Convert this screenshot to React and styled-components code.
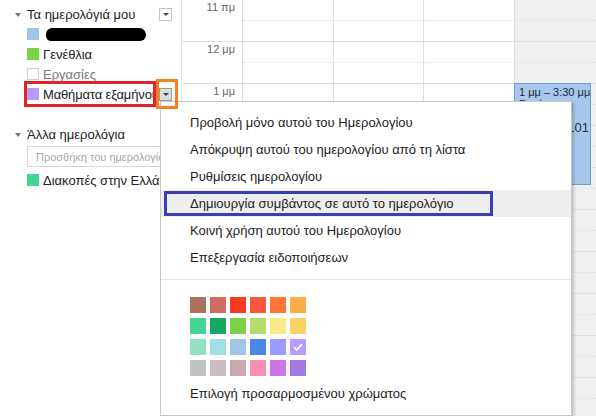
import React from 'react';
import styled, { createGlobalStyle } from 'styled-components';

const GlobalStyle = createGlobalStyle`
  html, body { margin: 0; padding: 0; background: #fff; }
  body { font-family: "Liberation Sans", Arial, sans-serif; }
`;

const Page = styled.div`
  position: relative;
  width: 596px;
  height: 416px;
  overflow: hidden;
  display: flex;
  background: #fff;
`;

// ---------- sidebar ----------
const Sidebar = styled.div`
  width: 182px;
  flex: none;
  box-sizing: border-box;
  border-right: 1px solid #e2e2e2;
  padding: 4px 9px 0 15px;
`;

const SectionHeader = styled.div`
  display: flex;
  align-items: center;
  height: 20px;
  margin-top: ${p => p.$gap || 0}px;
  font-size: 13px;
  color: #222;
  white-space: nowrap;
`;

const Caret = styled.span`
  width: 0;
  height: 0;
  margin: 2px 6px 0 0;
  border-left: 3px solid transparent;
  border-right: 3px solid transparent;
  border-top: 4px solid #777;
`;

const DropButton = styled.span`
  margin-left: ${p => (p.$inline ? 0 : 'auto')};
  width: 13px;
  height: 13px;
  box-sizing: border-box;
  border: 1px solid ${p => (p.$active ? '#9a9a9a' : '#c4c4c4')};
  background: ${p => (p.$active ? '#dcdcdc' : '#fff')};
  display: flex;
  align-items: center;
  justify-content: center;

  &::after {
    content: '';
    border-left: 3px solid transparent;
    border-right: 3px solid transparent;
    border-top: 3px solid #444;
  }
`;

const CalList = styled.div`
  padding-left: 12px;
`;

const CalRow = styled.div`
  display: flex;
  align-items: center;
  height: 20px;
  margin-top: ${p => p.$gap || 0}px;
`;

const CalLabel = styled.div`
  flex: none;
  display: flex;
  align-items: center;
  gap: 4px;
  height: 20px;
  width: ${p => (p.$marked ? '126px' : 'auto')};
  overflow: ${p => (p.$marked ? 'hidden' : 'visible')};
  outline: ${p => (p.$marked ? '3px solid #e2222a' : 'none')};
  letter-spacing: ${p => (p.$marked ? '-0.15px' : 'normal')};
  font-size: 13px;
  color: ${p => p.$color || '#222'};
  white-space: nowrap;
`;

const Swatch = styled.span`
  flex: none;
  width: 12px;
  height: 12px;
  box-sizing: border-box;
  background: ${p => p.$color};
  border: ${p => (p.$color === '#fff' ? '1px solid #d0d0d0' : 'none')};
`;

const Redacted = styled.span`
  display: inline-block;
  width: 100px;
  height: 13px;
  margin-left: 3px;
  background: #000;
  border-radius: 7px 8px 7px 6px;
`;

const OrangeFrame = styled.span`
  position: relative;
  z-index: 3;
  flex: none;
  margin-left: 3px;
  width: 22px;
  height: 30px;
  box-sizing: border-box;
  border: 3px solid #f5821f;
  padding: 6px 0 0 0;
  display: flex;
  align-items: flex-start;
`;

const SearchBox = styled.input`
  display: block;
  margin: 2px 0 0 12px;
  width: 152px;
  height: 21px;
  box-sizing: border-box;
  border: 1px solid #d9d9d9;
  padding: 0 0 0 8px;
  font-family: "Liberation Sans", Arial, sans-serif;
  font-size: 11px;
  outline: none;

  &::placeholder { color: #a8a8a8; }
`;

// ---------- week grid ----------
const Grid = styled.div`
  flex: 1;
  display: flex;
  min-width: 0;
`;

const Gutter = styled.div`
  width: 60px;
  flex: none;
`;

const TimeCell = styled.div`
  height: 42px;
  box-sizing: border-box;
  border-bottom: 1px solid #dedede;
  padding: 1px 7px 0 0;
  text-align: right;
  font-size: 11px;
  line-height: 13px;
  color: #666;
`;

const DayColumn = styled.div`
  position: relative;
  flex: ${p => (p.$width ? 'none' : '1')};
  width: ${p => (p.$width ? `${p.$width}px` : 'auto')};
  box-sizing: border-box;
  border-left: 1px solid #dedede;
  background: ${p => p.$bg || '#fff'};
`;

const Slot = styled.div`
  height: 42px;
  box-sizing: border-box;
  border-bottom: 1px solid #dedede;
`;

const HalfLine = styled.div`
  height: 21px;
  box-sizing: border-box;
  border-bottom: 1px dotted #e2e2e2;
`;

const EventBlock = styled.div`
  position: absolute;
  top: 83px;
  left: -1px;
  width: 77px;
  height: 102px;
  box-sizing: border-box;
  background: #a7c7ee;
  border: 1px solid #6e9dd2;
  padding: 2px 1px 0 4px;
  overflow: hidden;
  font-size: 11px;
  line-height: 12px;
  color: #1f2a3a;
  white-space: nowrap;
`;

const EventPlace = styled.div`
  margin-top: 10px;
  text-align: right;
  direction: rtl;
  font-size: 13px;
  line-height: 16px;
  color: #333;
`;

// ---------- dropdown menu ----------
const Menu = styled.div`
  position: absolute;
  z-index: 2;
  left: 160px;
  top: 101px;
  width: 412px;
  height: 315px;
  box-sizing: border-box;
  background: #fff;
  border: 1px solid #c8c8c8;
  box-shadow: 2px 2px 3px rgba(0, 0, 0, 0.2);
  padding-top: 7px;
`;

const MenuItem = styled.div`
  height: 27px;
  display: flex;
  align-items: center;
  padding-left: ${p => (p.$active ? 3 : 29)}px;
  background: ${p => (p.$active ? '#eeeeee' : 'transparent')};
  font-size: 13px;
  color: #222;
  white-space: nowrap;
`;

const FocusFrame = styled.div`
  width: 329px;
  height: 25px;
  box-sizing: border-box;
  border: 3px solid #3b3eb3;
  padding-left: 23px;
  display: flex;
  align-items: center;
`;

const Divider = styled.div`
  margin-top: 8px;
  height: 1px;
  background: #e6e6e6;
`;

const Palette = styled.div`
  display: grid;
  grid-template-columns: repeat(6, 16px);
  grid-auto-rows: 16px;
  column-gap: 4px;
  row-gap: 5px;
  margin: 17px 0 0 29px;
`;

const Chip = styled.div`
  background: ${p => p.$color};
  display: flex;
  align-items: center;
  justify-content: center;
`;

const CustomColor = styled.div`
  margin: 9px 0 0 29px;
  font-size: 13px;
  line-height: 18px;
  color: #222;
`;

const HOURS = ['11 πμ', '12 μμ', '1 μμ', '2 μμ', '3 μμ', '4 μμ', '5 μμ', '6 μμ', '7 μμ', '8 μμ'];

const DAYS = [
  { width: 91 },
  { width: 90 },
  { width: 91 },
  { bg: '#f0f0f0', event: true },
];

const MENU_ITEMS = [
  'Προβολή μόνο αυτού του Ημερολογίου',
  'Απόκρυψη αυτού του ημερολογίου από τη λίστα',
  'Ρυθμίσεις ημερολογίου',
  'Δημιουργία συμβάντος σε αυτό το ημερολόγιο',
  'Κοινή χρήση αυτού του Ημερολογίου',
  'Επεξεργασία ειδοποιήσεων',
];

const COLORS = [
  '#ac725e', '#d06b64', '#f83a22', '#fa573c', '#ff7537', '#ffad46',
  '#42d692', '#16a765', '#7bd148', '#b3dc6c', '#fbe983', '#fad165',
  '#92e1c0', '#9fe1e7', '#9fc6e7', '#4986e7', '#9a9cff', '#b99aff',
  '#c2c2c2', '#cabdbf', '#cca6ac', '#f691b2', '#cd74e6', '#a47ae2',
];

const SELECTED_COLOR = '#b99aff';

function Check() {
  return (
    <svg width="10" height="8" viewBox="0 0 10 8">
      <path d="M1 4.2 L3.8 6.8 L9 1.2" fill="none" stroke="#fff" strokeWidth="1.8" />
    </svg>
  );
}

export default function App() {
  return (
    <Page>
      <GlobalStyle />
      <Sidebar>
        <SectionHeader>
          <Caret />
          Τα ημερολόγιά μου
          <DropButton />
        </SectionHeader>
        <CalList>
          <CalRow>
            <CalLabel>
              <Swatch $color="#9fc6e7" />
              <Redacted />
            </CalLabel>
          </CalRow>
          <CalRow>
            <CalLabel>
              <Swatch $color="#7bd148" />
              Γενέθλια
            </CalLabel>
          </CalRow>
          <CalRow>
            <CalLabel $color="#777">
              <Swatch $color="#fff" />
              Εργασίες
            </CalLabel>
          </CalRow>
          <CalRow>
            <CalLabel $marked>
              <Swatch $color="#b99aff" />
              Μαθήματα εξαμήνου
            </CalLabel>
            <OrangeFrame>
              <DropButton $inline $active />
            </OrangeFrame>
          </CalRow>
        </CalList>

        <SectionHeader $gap={20}>
          <Caret />
          Άλλα ημερολόγια
        </SectionHeader>
        <SearchBox readOnly placeholder="Προσθήκη του ημερολογίου ενός φίλου" />
        <CalList>
          <CalRow $gap={3}>
            <CalLabel>
              <Swatch $color="#42d692" />
              Διακοπές στην Ελλάδα
            </CalLabel>
          </CalRow>
        </CalList>
      </Sidebar>

      <Grid>
        <Gutter>
          {HOURS.map(h => (
            <TimeCell key={h}>{h}</TimeCell>
          ))}
        </Gutter>
        {DAYS.map((d, i) => (
          <DayColumn key={i} $width={d.width} $bg={d.bg}>
            {HOURS.map(h => (
              <Slot key={h}>
                <HalfLine />
              </Slot>
            ))}
            {d.event && (
              <EventBlock>
                <div>1 μμ – 3:30 μμ</div>
                <div>Συνάντηση</div>
                <EventPlace>Αίθουσα 101</EventPlace>
              </EventBlock>
            )}
          </DayColumn>
        ))}
      </Grid>

      <Menu>
        {MENU_ITEMS.map((item, i) =>
          i === 3 ? (
            <MenuItem key={item} $active>
              <FocusFrame>{item}</FocusFrame>
            </MenuItem>
          ) : (
            <MenuItem key={item}>{item}</MenuItem>
          )
        )}
        <Divider />
        <Palette>
          {COLORS.map(c => (
            <Chip key={c} $color={c}>
              {c === SELECTED_COLOR && <Check />}
            </Chip>
          ))}
        </Palette>
        <CustomColor>Επιλογή προσαρμοσμένου χρώματος</CustomColor>
      </Menu>
    </Page>
  );
}
